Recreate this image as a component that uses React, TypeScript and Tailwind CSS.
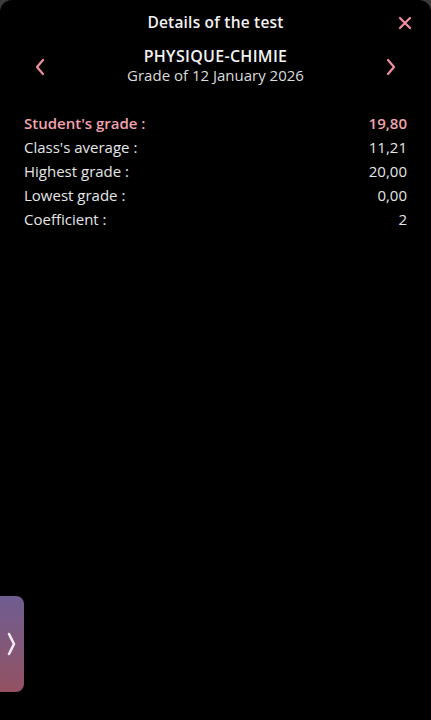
import React from 'react';

const rows = [
  { label: "Student's grade :", value: '19,80', accent: true },
  { label: "Class's average :", value: '11,21' },
  { label: 'Highest grade :', value: '20,00' },
  { label: 'Lowest grade :', value: '0,00' },
  { label: 'Coefficient :', value: '2' },
];

export default function App() {
  return (
    <div className="h-[720px] w-[431px] bg-[#3b3b3b] overflow-hidden" style={{ fontFamily: '"Open Sans", "Noto Sans", sans-serif' }}>
      <div className="relative h-full rounded-t-[12px] bg-black text-white">
        {/* Header */}
        <div className="relative flex h-[46px] items-center justify-center">
          <h1 className="text-[15.5px] font-semibold tracking-[0.2px] text-[#f2f2f2]">Details of the test</h1>
          <button className="absolute right-[18px] top-[15px] text-[#f28f9e]">
            <svg width="16" height="16" viewBox="0 0 16 16" fill="none" stroke="currentColor" strokeWidth="2.2" strokeLinecap="round">
              <path d="M3 3l10 10M13 3L3 13" />
            </svg>
          </button>
        </div>

        {/* Subject nav */}
        <div className="mt-[1px] flex items-center justify-between px-[33px]">
          <button className="mt-[2px] text-[#f28f9e]">
            <svg width="14" height="18" viewBox="0 0 14 18" fill="none" stroke="currentColor" strokeWidth="2.2" strokeLinecap="round" strokeLinejoin="round">
              <path d="M10 2L4 9l6 7" />
            </svg>
          </button>
          <div className="flex flex-col items-center leading-[19px]">
            <span className="text-[16px] font-semibold tracking-[0.3px] text-[#f2f2f2]">PHYSIQUE-CHIMIE</span>
            <span className="text-[15px] text-[#dcdcdc]">Grade of 12 January 2026</span>
          </div>
          <button className="mt-[2px] text-[#f28f9e]">
            <svg width="14" height="18" viewBox="0 0 14 18" fill="none" stroke="currentColor" strokeWidth="2.2" strokeLinecap="round" strokeLinejoin="round">
              <path d="M4 2l6 7-6 7" />
            </svg>
          </button>
        </div>

        {/* Grade details */}
        <div className="mt-[26px] flex flex-col px-[24px]">
          {rows.map((r) => (
            <div
              key={r.label}
              className={`flex h-[24px] items-center justify-between text-[15px] ${r.accent ? 'font-semibold text-[#f2a3ad]' : 'text-[#e6e6e6]'}`}
            >
              <span>{r.label}</span>
              <span>{r.value}</span>
            </div>
          ))}
        </div>

        {/* Side tab */}
        <div className="absolute left-0 top-[596px] flex h-[96px] w-[24px] items-center justify-center rounded-r-[8px] bg-gradient-to-b from-[#6e5d92] to-[#935161]">
          <svg width="12" height="26" viewBox="0 0 12 26" fill="none" stroke="#f7e9f2" strokeWidth="2.6" strokeLinecap="round" strokeLinejoin="round">
            <path d="M3 3l5 10-5 10" />
          </svg>
        </div>
      </div>
    </div>
  );
}
